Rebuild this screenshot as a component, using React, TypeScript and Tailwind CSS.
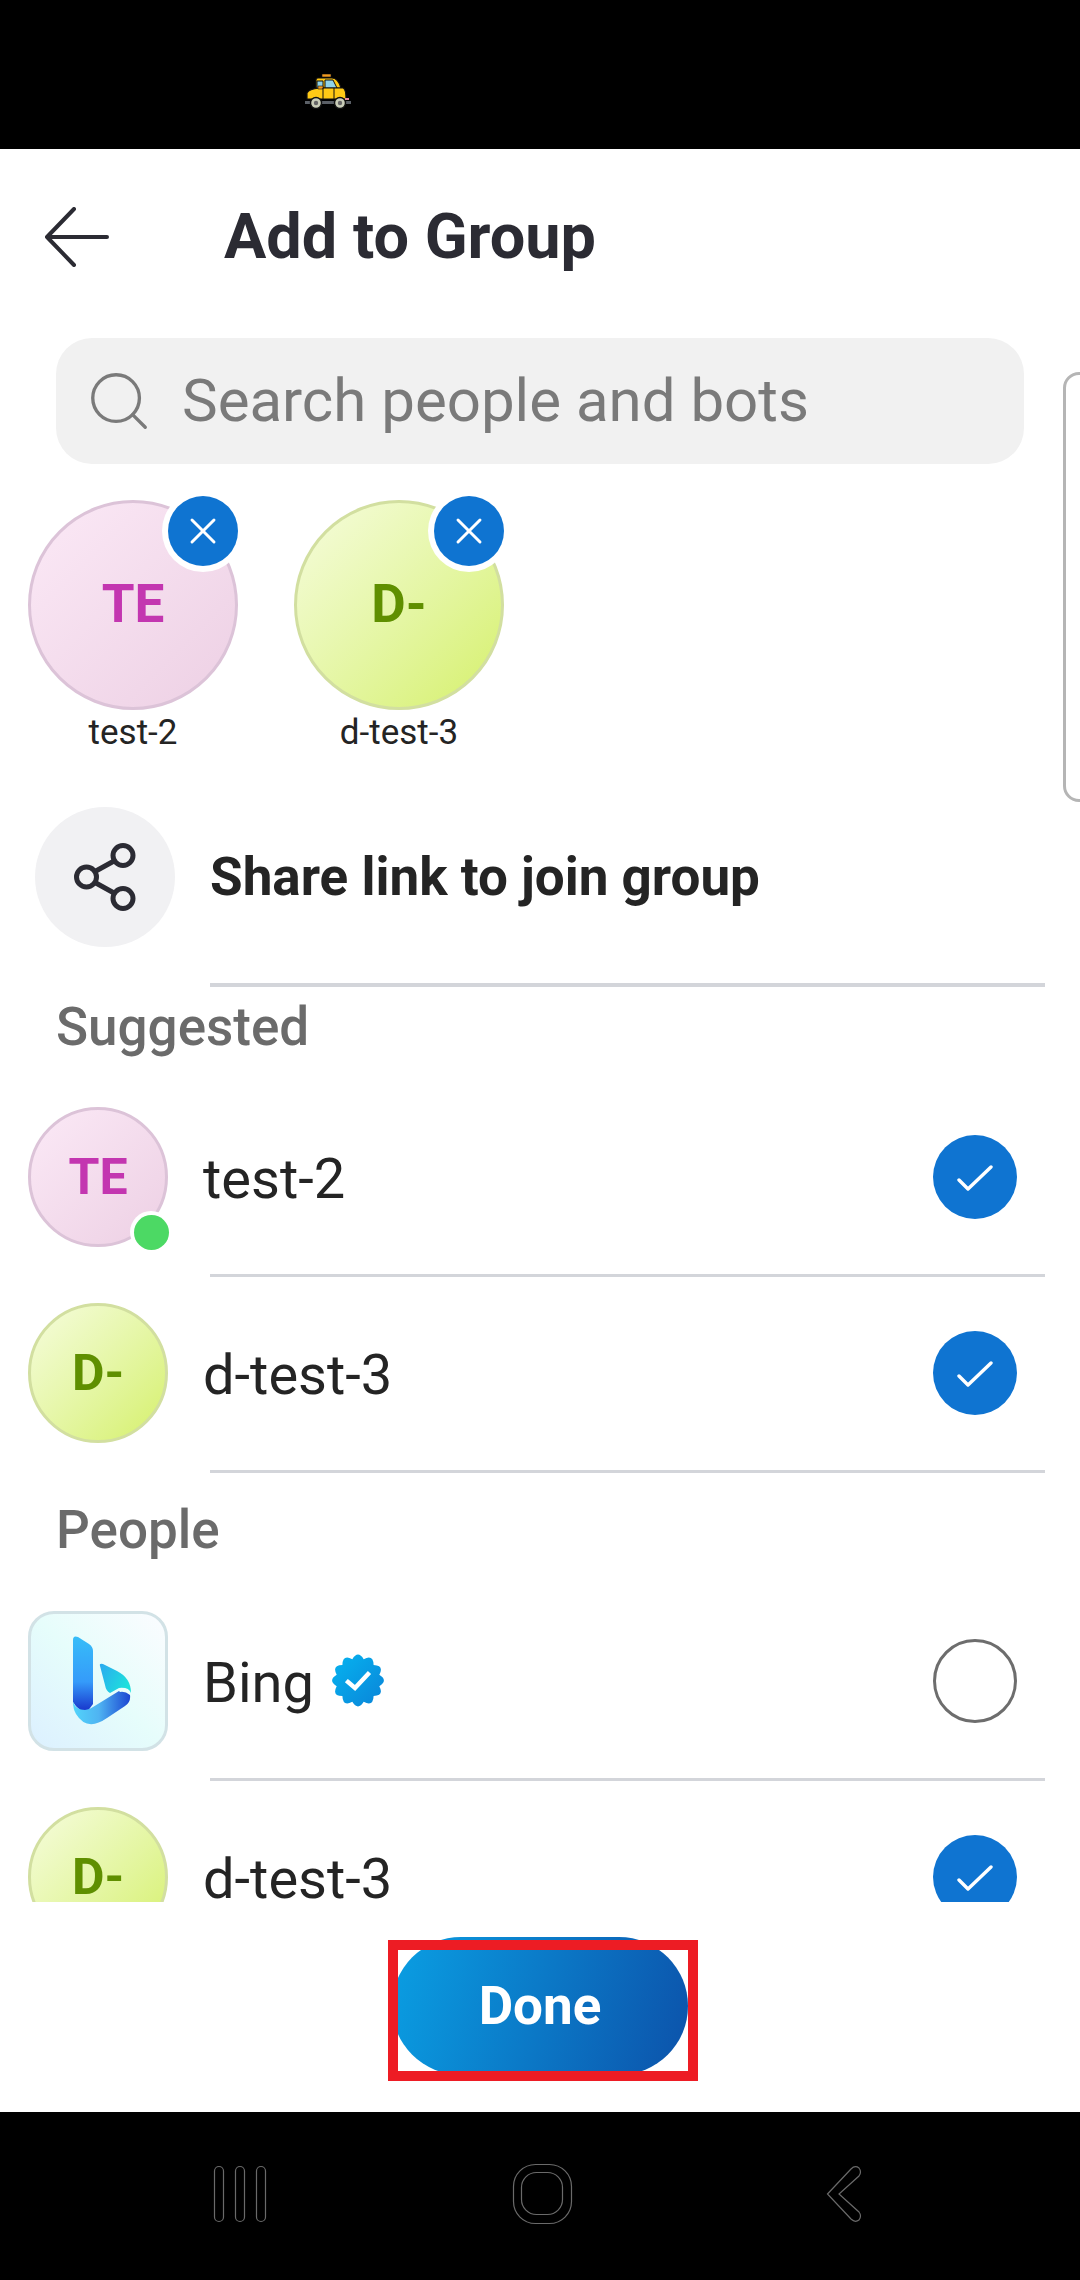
import { Search, X } from "lucide-react";

const ROBOTO = "font-['Roboto',sans-serif]";

// 12 rounded lobes for the verified badge
function scallopPath() {
  const cx = 26;
  const cy = 26.5;
  const lobes = 12;
  let d = "";
  for (let i = 0; i < lobes; i++) {
    const a0 = ((i - 0.5) / lobes) * Math.PI * 2 - Math.PI / 2;
    const a1 = (i / lobes) * Math.PI * 2 - Math.PI / 2;
    const a2 = ((i + 0.5) / lobes) * Math.PI * 2 - Math.PI / 2;
    const inner = 22;
    const outer = 30.5;
    if (i === 0) d += `M${(cx + inner * Math.cos(a0)).toFixed(1)} ${(cy + inner * Math.sin(a0)).toFixed(1)} `;
    d += `Q${(cx + outer * Math.cos(a1)).toFixed(1)} ${(cy + outer * Math.sin(a1)).toFixed(1)} ${(cx + inner * Math.cos(a2)).toFixed(1)} ${(cy + inner * Math.sin(a2)).toFixed(1)} `;
  }
  return d + "Z";
}

function Taxi() {
  return (
    <svg viewBox="0 0 46 36" className="w-[46px] h-[36px] ml-[305px] mt-[74px]">
      <rect x="17" y="0" width="9" height="3" fill="#f29a1f" stroke="#111" strokeWidth="0.6" />
      <path d="M11 14 V6 Q11 4 13 4 H27 Q33 4 36 14 Z" fill="#ffc915" stroke="#111" strokeWidth="1.2" />
      <path d="M12 7 H18 V15 H12 Z" fill="#8fd3e8" stroke="#111" strokeWidth="1" />
      <path d="M20 6 H28 L32 14 H20 Z" fill="#8fd3e8" stroke="#111" strokeWidth="1" />
      <path d="M2 19 Q4 15 14 14 H38 Q41 15 41 25 H2 Z" fill="#ffc915" stroke="#111" strokeWidth="1.2" />
      <path d="M13 12 H18 V15 H13 Z" fill="#f29a1f" stroke="#111" strokeWidth="0.6" />
      <path d="M18 14 V25 M29 14 V25" stroke="#111" strokeWidth="1" />
      <rect x="0" y="27" width="46" height="3" fill="#5a5f66" />
      <circle cx="11" cy="29" r="5.5" fill="#c9cdb8" stroke="#111" strokeWidth="1.4" />
      <circle cx="11" cy="29" r="2.2" fill="#666" />
      <circle cx="35" cy="29" r="5.5" fill="#c9cdb8" stroke="#111" strokeWidth="1.4" />
      <circle cx="35" cy="29" r="2.2" fill="#666" />
      <rect x="40" y="24" width="4" height="2" fill="#e88aa0" />
    </svg>
  );
}

function Avatar({ kind, big }: { kind: "te" | "d"; big?: boolean }) {
  const size = big ? "w-[210px] h-[210px] text-[53px]" : "w-[140px] h-[140px] text-[50px]";
  const skin =
    kind === "te"
      ? "bg-gradient-to-br from-[#fbe9f6] to-[#edd0e4] border-[#dcc3d8] text-[#c336b0]"
      : "bg-gradient-to-br from-[#f6fcdc] to-[#d6f069] border-[#d2dfa0] text-[#5f8f00]";
  return (
    <div className={`${size} ${skin} rounded-full border-[3px] flex items-center justify-center font-bold`}>
      {kind === "te" ? "TE" : "D-"}
    </div>
  );
}

function Picked({ kind, name }: { kind: "te" | "d"; name: string }) {
  return (
    <div className="relative w-[210px] flex flex-col items-center">
      <Avatar kind={kind} big />
      <div className="absolute -top-[10px] left-[134px] w-[82px] h-[82px] rounded-full bg-white flex items-center justify-center">
        <div className="w-[70px] h-[70px] rounded-full bg-[#0f74d1] flex items-center justify-center">
          <X size={44} strokeWidth={1.6} color="#fff" />
        </div>
      </div>
      <span className="mt-[4px] text-[35px] leading-[38px] text-[#242424]">{name}</span>
    </div>
  );
}

function Check({ on }: { on: boolean }) {
  if (!on) {
    return <div className="w-[84px] h-[84px] rounded-full border-[3px] border-[#6d6d6d] bg-white" />;
  }
  return (
    <div className="w-[84px] h-[84px] rounded-full bg-[#0f74d1] flex items-center justify-center">
      <svg viewBox="0 0 36 26" className="w-[36px] h-[26px] mt-[2px]" fill="none" stroke="#fff" strokeWidth="3.4" strokeLinecap="round" strokeLinejoin="round">
        <path d="M2 15 L11 24 L34 2" />
      </svg>
    </div>
  );
}

function Row({ avatar, name, on, badge, divider = true }: { avatar: React.ReactNode; name: string; on: boolean; badge?: React.ReactNode; divider?: boolean }) {
  return (
    <div className="shrink-0">
      <div className="h-[140px] pl-[28px] pr-[63px] flex items-center">
        <div className="relative w-[140px] shrink-0">{avatar}</div>
        <span className="ml-[35px] mt-[3px] text-[56px] leading-none text-[#242424]">{name}</span>
        {badge}
        <div className="ml-auto">
          <Check on={on} />
        </div>
      </div>
      {divider && <div className="ml-[210px] mr-[35px] mt-[27px] h-[3px] bg-[#d3d5da]" />}
    </div>
  );
}

function BingTile() {
  return (
    <div className="w-[140px] h-[140px] rounded-[26px] border-[3px] border-[#d2e2e6] bg-gradient-to-tr from-[#dcf0ff] via-[#e6fdfb] to-[#fbfcff] flex items-center justify-center">
      <svg viewBox="0 0 58 90" className="w-[58px] h-[90px] ml-[7px]">
        <defs>
          <linearGradient id="bingA" x1="0" y1="0" x2="0" y2="1">
            <stop offset="0" stopColor="#37bdf8" />
            <stop offset="0.6" stopColor="#359bfa" />
            <stop offset="0.95" stopColor="#1b3fd0" />
          </linearGradient>
          <linearGradient id="bingB" x1="0" y1="0" x2="1" y2="0">
            <stop offset="0" stopColor="#52d4fb" />
            <stop offset="0.45" stopColor="#4fb4f2" />
            <stop offset="1" stopColor="#1b46d2" />
          </linearGradient>
          <linearGradient id="bingC" x1="0" y1="0" x2="1" y2="0.5">
            <stop offset="0" stopColor="#2ba9f0" />
            <stop offset="1" stopColor="#1ee0dc" />
          </linearGradient>
        </defs>
        <path d="M0 4 Q0 -1 5 1 L16 8 Q20 11 20 15 V68 L14 76 Q6 76 0 66 Z" fill="url(#bingA)" />
        <path d="M0 66 Q3 74 12 74 Q16 74 20 71 L46 55 L47 56 Q52 55 57 59 Q58 66 52 70 L34 82 Q14 96 3 78 Q0 73 0 66 Z" fill="url(#bingB)" />
        <path d="M27 30 Q26 27 30 28 L44 35 Q58 42 58 57 Q56 51 46 52 L37 57 Q33 55 32 49 Z" fill="url(#bingC)" />
      </svg>
    </div>
  );
}

function VerifiedBadge() {
  return (
    <svg viewBox="0 0 52 54" className="w-[52px] h-[54px] ml-[18px]">
      <defs>
        <linearGradient id="verifiedFill" x1="0" y1="0" x2="1" y2="1">
          <stop offset="0" stopColor="#06b4f0" />
          <stop offset="1" stopColor="#0a84d8" />
        </linearGradient>
      </defs>
      <path d={scallopPath()} fill="url(#verifiedFill)" />
      <path d="M16 28 L23 34 L36 20" fill="none" stroke="#fff" strokeWidth="4.4" strokeLinecap="square" />
    </svg>
  );
}

export default function App() {
  return (
    <div className={`${ROBOTO} relative w-[1080px] h-[2280px] bg-white flex flex-col overflow-hidden`}>
      {/* status bar */}
      <div className="h-[149px] shrink-0 bg-black">
        <Taxi />
      </div>

      {/* header */}
      <div className="h-[189px] shrink-0 flex items-start">
        <svg viewBox="0 0 66 60" className="w-[66px] h-[60px] ml-[44px] mt-[58px]" fill="none" stroke="#2b2b33" strokeWidth="4" strokeLinecap="round" strokeLinejoin="round">
          <path d="M30 2 L3 30 L30 58 M3 30 H63" />
        </svg>
        <h1 className="ml-[114px] mt-[51px] text-[63px] leading-[74px] font-bold text-[#2b2b33]">Add to Group</h1>
      </div>

      {/* search */}
      <div className="ml-[56px] w-[968px] h-[126px] shrink-0 rounded-[36px] bg-[#f1f1f1] flex items-center">
        <Search size={70} strokeWidth={1.15} color="#7a7a7a" className="ml-[28px]" />
        <span className="ml-[28px] text-[60px] leading-none text-[#7a7a7a]">Search people and bots</span>
      </div>

      {/* selected people */}
      <div className="ml-[28px] mt-[36px] flex gap-[56px] shrink-0">
        <Picked kind="te" name="test-2" />
        <Picked kind="d" name="d-test-3" />
      </div>

      {/* share link */}
      <div className="ml-[35px] mt-[55px] flex items-center shrink-0">
        <div className="w-[140px] h-[140px] rounded-full bg-[#f1f1f3] flex items-center justify-center">
          <svg viewBox="0 0 62 68" className="w-[62px] h-[68px]" fill="none" stroke="#2b2b33" strokeWidth="5">
            <circle cx="49" cy="12.5" r="10" />
            <circle cx="49" cy="55.5" r="10" />
            <circle cx="12.5" cy="34" r="10" />
            <path d="M21 28.5 L40 18 M21 39.5 L40 50" />
          </svg>
        </div>
        <span className="ml-[35px] text-[53px] leading-none font-bold text-[#242424]">Share link to join group</span>
      </div>
      <div className="ml-[210px] mr-[35px] mt-[36px] h-[4px] shrink-0 bg-[#d3d5da]" />

      {/* list, clipped above the Done button */}
      <div className="h-[915px] shrink-0 overflow-hidden flex flex-col">
        <div className="ml-[56px] mt-[12px] h-[56px] shrink-0 text-[53px] leading-[56px] font-medium text-[#6b6b6b]">Suggested</div>
        <div className="mt-[52px]">
          <Row
            name="test-2"
            on
            avatar={
              <>
                <Avatar kind="te" />
                <div className="absolute -bottom-[6px] -right-[4px] w-[42px] h-[42px] rounded-full bg-white flex items-center justify-center">
                  <div className="w-[35px] h-[35px] rounded-full bg-[#4cd964]" />
                </div>
              </>
            }
          />
        </div>
        <div className="mt-[26px]">
          <Row name="d-test-3" on avatar={<Avatar kind="d" />} />
        </div>
        <div className="ml-[56px] mt-[29px] h-[56px] shrink-0 text-[53px] leading-[56px] font-medium text-[#6b6b6b]">People</div>
        <div className="mt-[53px]">
          <Row name="Bing" on={false} avatar={<BingTile />} badge={<VerifiedBadge />} />
        </div>
        <div className="mt-[26px]">
          <Row name="d-test-3" on avatar={<Avatar kind="d" />} divider={false} />
        </div>
      </div>

      {/* done button */}
      <div className="mt-[35px] flex justify-center shrink-0">
        <button className="w-[296px] h-[138px] pt-[2px] rounded-full bg-[linear-gradient(105deg,#0a9fe3,#0c52aa)] text-white text-[53px] font-bold">Done</button>
      </div>

      {/* nav bar */}
      <div className="absolute left-0 right-0 bottom-0 h-[168px] bg-black">
        <svg viewBox="0 0 1080 168" className="w-[1080px] h-[168px]" fill="none" stroke="#6a6a6a" strokeWidth="1.2">
          <rect x="214.5" y="54.5" width="9" height="55" rx="4.5" />
          <rect x="235.5" y="54.5" width="9" height="55" rx="4.5" />
          <rect x="256.5" y="54.5" width="9" height="55" rx="4.5" />
          <rect x="513.5" y="52.5" width="58" height="59" rx="22" />
          <rect x="521.5" y="60.5" width="41" height="42" rx="15" />
          <path d="M827.5 82 L851 57 Q855 53 859 56 Q862 60 859 64 L839 82 L859 100 Q862 104 859 108 Q855 111 851 107 Z" />
        </svg>
      </div>

      {/* red highlight round the button, and the sliver at the right edge */}
      <div className="absolute left-[388px] top-[1940px] w-[310px] h-[141px] border-[10px] border-[#ed1c24]" />
      <div className="absolute left-[1063px] top-[372px] w-[40px] h-[430px] rounded-[16px] border-[3px] border-[#b5b5b5] bg-white" />
    </div>
  );
}
